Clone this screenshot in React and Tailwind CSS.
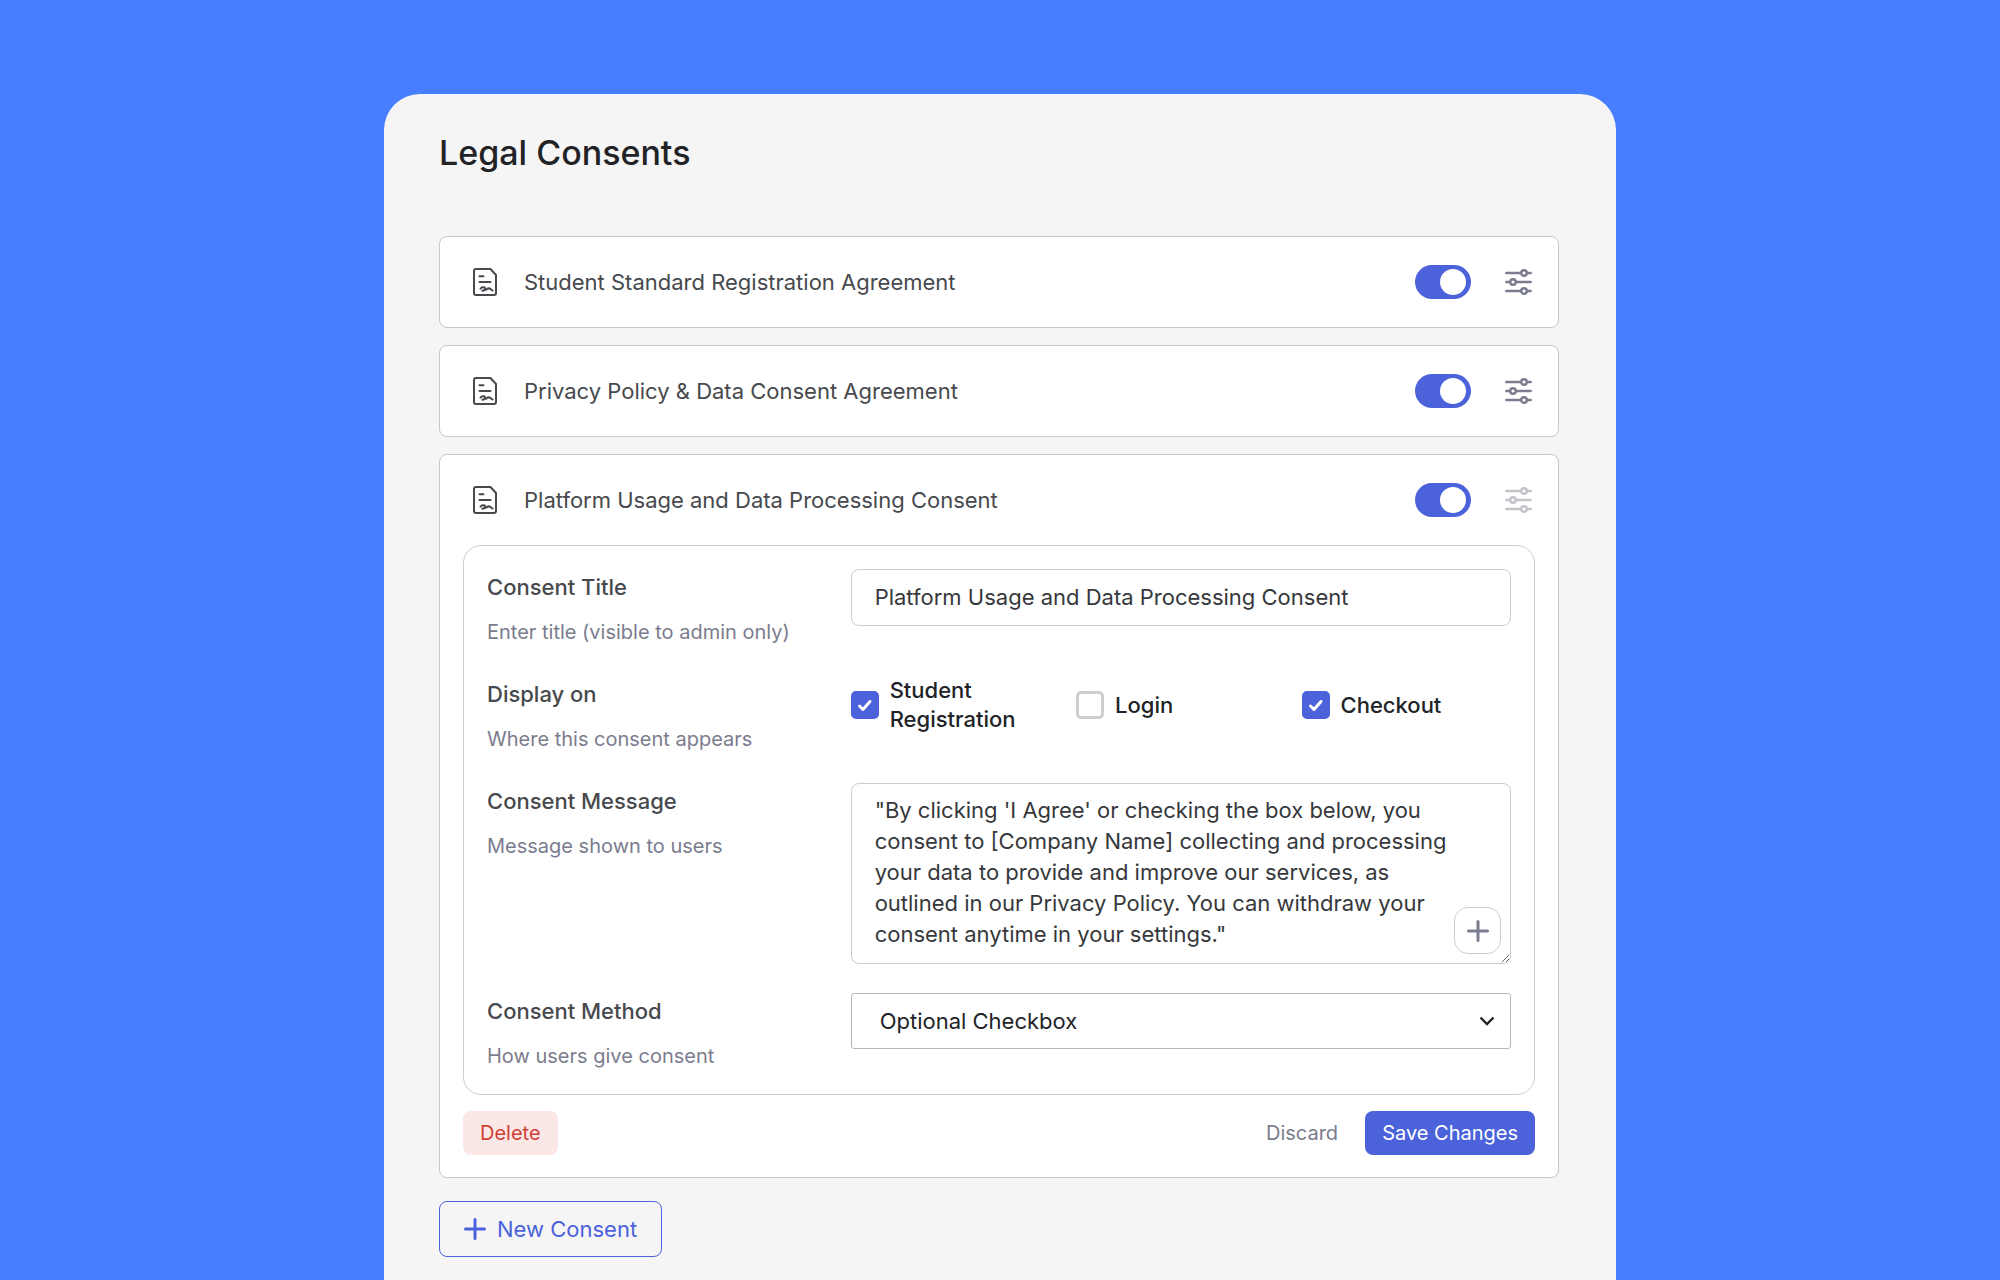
import { useState } from 'react'

const message =
  '"By clicking \'I Agree\' or checking the box below, you consent to [Company Name] collecting and processing your data to provide and improve our services, as outlined in our Privacy Policy. You can withdraw your consent anytime in your settings."'

function DocIcon() {
  return (
    <svg width="24" height="28" viewBox="0 0 24 28" fill="none" stroke="#47494d" strokeWidth="2" strokeLinecap="round" strokeLinejoin="round" aria-hidden="true">
      <path d="M3 1h14.5L23 7v18a2 2 0 0 1-2 2H3a2 2 0 0 1-2-2V3a2 2 0 0 1 2-2Z" />
      <path d="M6.5 8.2h4M6.5 14h11" />
      <path d="M7.5 20.6c1.300-1.400 3.700-1.900 4.500-.8.800 1.200-.6 3-2.700 3M12 20.800c.4.900.9 1.100 1.600.6 1.300-1.100 2.800-1.300 4-.3.800.7 1.100 1.300 2 1.400" />
    </svg>
  )
}

function SlidersIcon() {
  return (
    <svg width="27" height="26" viewBox="0 0 27 26" fill="none" stroke="currentColor" strokeWidth="2.4" strokeLinecap="round" aria-hidden="true">
      <path d="M1.300 4H16M22 4h3.700M1.300 13H5M11 13h14.700M1.300 22H16M22 22h3.700" />
      <circle cx="19" cy="4" r="2.8" />
      <circle cx="8" cy="13" r="2.800" />
      <circle cx="19" cy="22" r="2.8" />
    </svg>
  )
}

function PlusIcon() {
  return (
    <svg width="22" height="22" viewBox="0 0 22 22" fill="none" stroke="currentColor" strokeWidth="3" strokeLinecap="round" aria-hidden="true">
      <path d="M11 1.500v19M1.500 11h19" />
    </svg>
  )
}

function ConsentHeader({ title, editing }) {
  return (
    <div className="flex h-[90px] items-center pr-[26px] pl-[33px]">
      <DocIcon />
      <h2 className="ml-[27px] flex-1 text-[22px] text-[#47494d]">{title}</h2>
      <input
        type="checkbox"
        role="switch"
        defaultChecked
        aria-label={`Enable ${title}`}
        className="h-[34px] w-14 appearance-none rounded-full bg-gray-300 before:mt-1 before:ml-[5px] before:block before:size-[26px] before:rounded-full before:bg-white checked:bg-[#4b62db] checked:before:ml-[25px]"
      />
      <button
        type="button"
        disabled={editing}
        aria-label={`Edit ${title}`}
        className="ml-[34px] text-[#7b7c8e] disabled:text-[#c3c4ca]"
      >
        <SlidersIcon />
      </button>
    </div>
  )
}

function Field({ id, label, hint, children }) {
  return (
    <div className="grid grid-cols-[minmax(0,364fr)_minmax(0,661fr)]">
      <div>
        <label htmlFor={id} id={`${id}-label`} className="block text-[22px] leading-9 font-medium text-[#47494d]">
          {label}
        </label>
        <p className="mt-3 text-[20px] leading-[30px] text-[#7b7c8e]">{hint}</p>
      </div>
      <div>{children}</div>
    </div>
  )
}

function Checkbox({ id, label, defaultChecked }) {
  return (
    <label className="flex items-center gap-[11px] text-[22px] leading-[29px] font-medium text-[#212327]">
      <span className="grid shrink-0">
        <input
          id={id}
          type="checkbox"
          defaultChecked={defaultChecked}
          className="peer col-start-1 row-start-1 size-7 appearance-none rounded-[5px] border-[3px] border-[#cdced2] bg-white checked:border-[#4b62db] checked:bg-[#4b62db]"
        />
        <svg viewBox="0 0 28 28" className="pointer-events-none invisible col-start-1 row-start-1 size-7 peer-checked:visible" fill="none" stroke="white" strokeWidth="3" strokeLinecap="round" strokeLinejoin="round" aria-hidden="true">
          <path d="M8.500 15l3.500 3.500 7-8" />
        </svg>
      </span>
      {label}
    </label>
  )
}

export default function App() {
  const [title, setTitle] = useState('Platform Usage and Data Processing Consent')

  return (
    <div className="min-h-screen bg-[#477eff] pt-[94px] font-['Inter',sans-serif]">
      <main className="mx-auto min-h-[calc(100vh-94px)] max-w-[1232px] rounded-t-[36px] bg-[#f5f5f5] pr-[57px] pb-[23px] pl-[55px]">
        <h1 className="pt-9 text-[34px] leading-[46px] font-medium text-[#212327]">Legal Consents</h1>

        <div className="mt-[60px] flex flex-col gap-[17px]">
          <section className="rounded-lg border border-[#c8c8ca] bg-white">
            <ConsentHeader title="Student Standard Registration Agreement" />
          </section>
          <section className="rounded-lg border border-[#c8c8ca] bg-white">
            <ConsentHeader title="Privacy Policy &amp; Data Consent Agreement" />
          </section>

          <section className="rounded-lg border border-[#c8c8ca] bg-white">
            <ConsentHeader title="Platform Usage and Data Processing Consent" editing />

            <form className="px-[23px] pb-[22px]" onSubmit={(e) => e.preventDefault()}>
              <div className="flex flex-col gap-[29px] rounded-[18px] border border-[#cdcdd0] p-[23px]">
                <Field id="consent-title" label="Consent Title" hint="Enter title (visible to admin only)">
                  <input
                    id="consent-title"
                    type="text"
                    value={title}
                    onChange={(e) => setTitle(e.target.value)}
                    className="h-[57px] w-full rounded-lg border border-[#cdcdd0] bg-white px-[23px] pb-0.5 text-[22px] text-[#36383b]"
                  />
                </Field>

                <Field id="display-on" label="Display on" hint="Where this consent appears">
                  <div role="group" aria-labelledby="display-on-label" className="grid grid-cols-3 gap-4">
                    <Checkbox id="display-on" label="Student Registration" defaultChecked />
                    <Checkbox label="Login" />
                    <Checkbox label="Checkout" defaultChecked />
                  </div>
                </Field>

                <Field id="consent-message" label="Consent Message" hint="Message shown to users">
                  <div className="relative">
                    <textarea
                      id="consent-message"
                      rows={5}
                      defaultValue={message}
                      className="block h-[181px] w-full resize overflow-hidden rounded-lg border border-[#cdcdd0] bg-white py-[11px] pr-12 pl-[23px] text-[22px] leading-[31px] text-[#36383b]"
                    />
                    <button
                      type="button"
                      aria-label="Insert variable"
                      className="absolute right-[10px] bottom-[10px] flex size-[47px] items-center justify-center rounded-[14px] border border-[#cdcdd0] bg-white text-[#7b7c8e]"
                    >
                      <PlusIcon />
                    </button>
                  </div>
                </Field>

                <Field id="consent-method" label="Consent Method" hint="How users give consent">
                  <div className="grid items-center">
                    <select
                      id="consent-method"
                      className="col-start-1 row-start-1 h-14 w-full appearance-none rounded-[3px] border border-[#b8b8bb] bg-white px-7 text-[22px] text-[#212327]"
                    >
                      <option>Optional Checkbox</option>
                      <option>Required Checkbox</option>
                    </select>
                    <svg width="16" height="10" viewBox="0 0 16 10" className="pointer-events-none col-start-1 row-start-1 mr-4 justify-self-end" fill="none" stroke="#212327" strokeWidth="2.4" aria-hidden="true">
                      <path d="M1.500 1.500L8 8l6.500-6.500" />
                    </svg>
                  </div>
                </Field>
              </div>

              <div className="mt-4 flex items-center text-[20px]">
                <button type="button" className="h-11 rounded-lg bg-[#fae7e6] px-[17px] text-[#cf4037]">
                  Delete
                </button>
                <button type="button" className="ml-auto h-11 px-[27px] text-[#7b7c8e]">
                  Discard
                </button>
                <button type="submit" className="h-11 rounded-lg bg-[#4b62db] px-[17px] text-white">
                  Save Changes
                </button>
              </div>
            </form>
          </section>
        </div>

        <button
          type="button"
          className="mt-[23px] flex h-14 items-center gap-[11px] rounded-lg border border-[#4b62db] px-6 text-[22px] text-[#4b62db]"
        >
          <PlusIcon />
          New Consent
        </button>
      </main>
    </div>
  )
}
